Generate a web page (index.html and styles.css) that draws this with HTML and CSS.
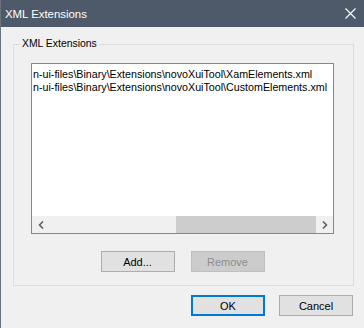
FILE: index.html
```html
<!DOCTYPE html>
<html lang="en">
<head>
  <meta charset="UTF-8">
  <title>XML Extensions</title>
  <link rel="stylesheet" href="styles.css">
</head>
<body>
  <div class="window">
    <div class="titlebar">
      <span class="title">XML Extensions</span>
      <svg class="close" width="11" height="11" viewBox="0 0 11 11">
        <path d="M0.5 0.5 L10.5 10.5 M10.5 0.5 L0.5 10.5" stroke="#fff" stroke-width="1.1" fill="none"/>
      </svg>
    </div>
    <div class="content">
      <fieldset class="group">
        <legend>XML Extensions</legend>
        <div class="listbox">
          <div class="items">
            <div class="item">n-ui-files\Binary\Extensions\novoXuiTool\XamElements.xml</div>
            <div class="item">n-ui-files\Binary\Extensions\novoXuiTool\CustomElements.xml</div>
          </div>
          <!-- horizontal scrollbar -->
          <div class="hscroll">
            <span class="arrow">
              <svg width="6" height="8" viewBox="0 0 6 8"><path d="M5 0.5 L1.5 4 L5 7.5" stroke="#606060" stroke-width="1.6" fill="none"/></svg>
            </span>
            <div class="track"><div class="thumb"></div></div>
            <span class="arrow">
              <svg width="6" height="8" viewBox="0 0 6 8"><path d="M1 0.5 L4.5 4 L1 7.5" stroke="#606060" stroke-width="1.6" fill="none"/></svg>
            </span>
          </div>
        </div>
        <div class="list-buttons">
          <button class="btn">Add...</button>
          <button class="btn" disabled>Remove</button>
        </div>
      </fieldset>
      <div class="dialog-buttons">
        <button class="btn btn-default">OK</button>
        <button class="btn">Cancel</button>
      </div>
    </div>
  </div>
</body>
</html>
```

FILE: styles.css
```css
body {
  margin: 0;
  background: #f0f0f0;
  font-family: "Liberation Sans", Arial, sans-serif;
  font-size: 11px;
  color: #000;
}
.window {
  height: 328px;
  border-left: 1px solid #6b737d;
  overflow: hidden;
}
.titlebar {
  height: 27px;
  background: #4e5a6a;
  color: #fff;
  display: flex;
  align-items: center;
  justify-content: space-between;
  padding: 0 8px 0 4px;
  font-size: 11.4px;
}
.close {
  display: block;
}
.content {
  padding-top: 11px;
}
.group {
  margin: 0 10px 0 12px;
  padding: 13px 19px 13px 17px;
  border: 1px solid #dcdcdc;
  min-width: 0;
}
.group legend {
  margin-left: -11px;
  padding: 0 2px;
  line-height: 12px;
  font-size: 10.4px;
}
.listbox {
  width: 301px;
  height: 169px;
  border: 1px solid #828790;
  background: #fff;
  display: flex;
  flex-direction: column;
  justify-content: space-between;
}
.items {
  padding: 4px 0 0 1px;
  white-space: nowrap;
  overflow: hidden;
  font-size: 10.7px;
}
.item {
  line-height: 13px;
}
.hscroll {
  height: 17px;
  display: flex;
  background: #f0f0f0;
}
.arrow {
  width: 17px;
  display: flex;
  align-items: center;
  justify-content: center;
}
.track {
  flex: 1;
  padding-left: 127px;
}
.thumb {
  width: 140px;
  height: 100%;
  background: #cdcdcd;
}
.list-buttons {
  display: flex;
  justify-content: center;
  gap: 16px;
  margin-top: 17px;
}
.dialog-buttons {
  display: flex;
  justify-content: flex-end;
  gap: 14px;
  margin: 9px 11px 0 0;
}
.btn {
  width: 74px;
  height: 21px;
  padding: 0;
  border: 1px solid #adadad;
  background: #e1e1e1;
  font-family: inherit;
  font-size: 11px;
  color: #000;
}
.btn:disabled {
  background: #cccccc;
  border-color: #bfbfbf;
  color: #8d8d8d;
}
.btn-default {
  border: 2px solid #0078d7;
}
```
